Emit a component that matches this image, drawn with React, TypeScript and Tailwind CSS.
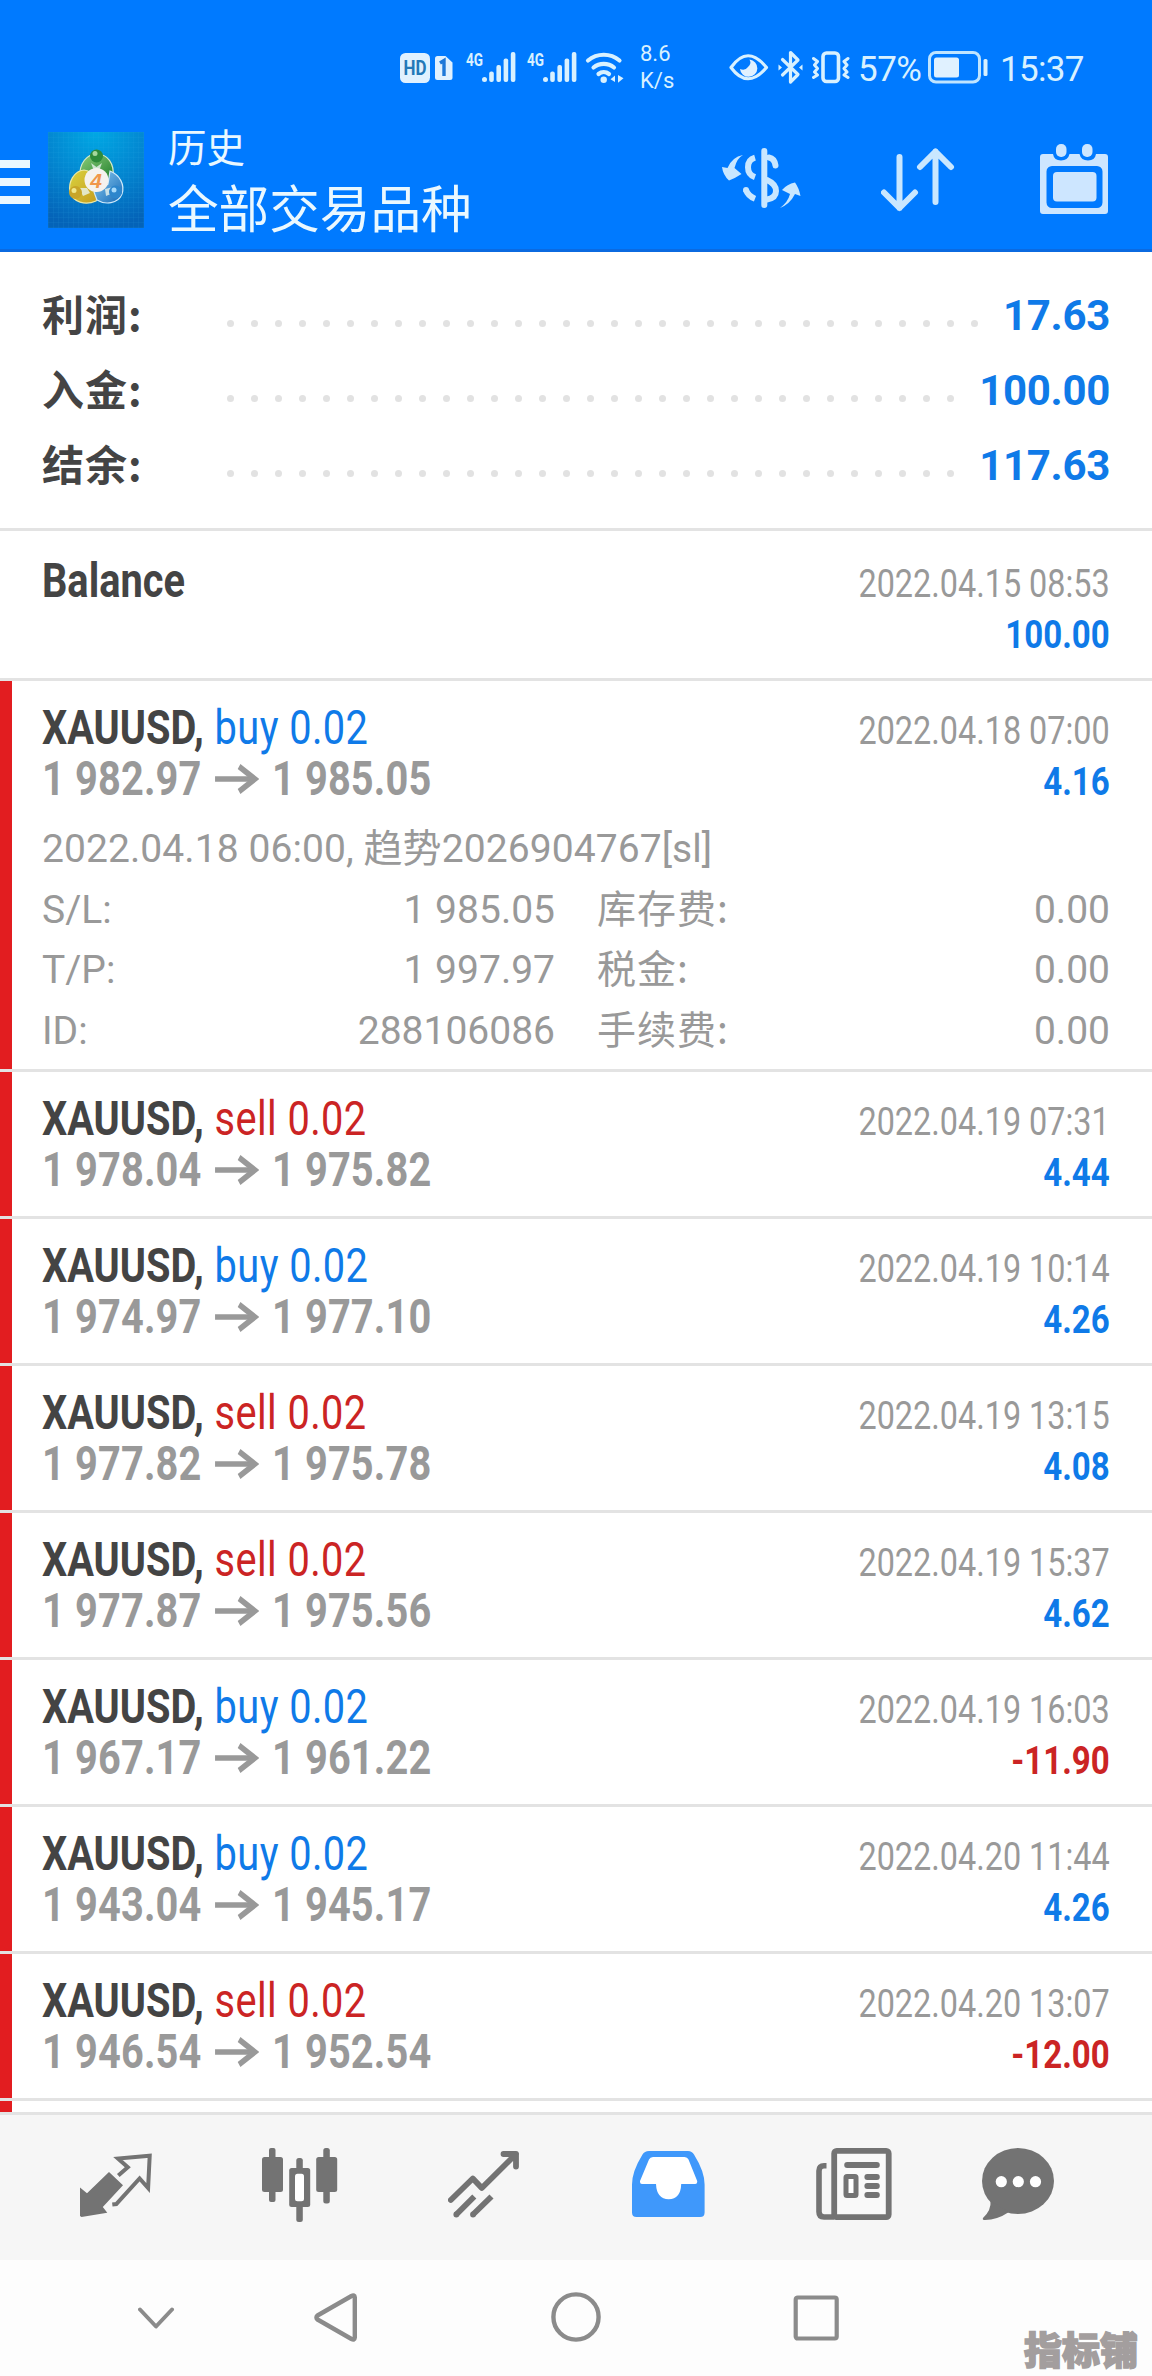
import type { ReactNode } from 'react'

type Trade = {
  side: 'buy' | 'sell'
  open: string
  close: string
  time: string
  profit: string
  expanded?: boolean
}

const summary = [
  { label: '利润:', value: '17.63', dots: 32 },
  { label: '入金:', value: '100.00', dots: 31 },
  { label: '结余:', value: '117.63', dots: 31 },
]

const trades: Trade[] = [
  { side: 'buy', open: '1 982.97', close: '1 985.05', time: '2022.04.18 07:00', profit: '4.16', expanded: true },
  { side: 'sell', open: '1 978.04', close: '1 975.82', time: '2022.04.19 07:31', profit: '4.44' },
  { side: 'buy', open: '1 974.97', close: '1 977.10', time: '2022.04.19 10:14', profit: '4.26' },
  { side: 'sell', open: '1 977.82', close: '1 975.78', time: '2022.04.19 13:15', profit: '4.08' },
  { side: 'sell', open: '1 977.87', close: '1 975.56', time: '2022.04.19 15:37', profit: '4.62' },
  { side: 'buy', open: '1 967.17', close: '1 961.22', time: '2022.04.19 16:03', profit: '-11.90' },
  { side: 'buy', open: '1 943.04', close: '1 945.17', time: '2022.04.20 11:44', profit: '4.26' },
  { side: 'sell', open: '1 946.54', close: '1 952.54', time: '2022.04.20 13:07', profit: '-12.00' },
]

const details = [
  ['S/L:', '1 985.05', '库存费:', '0.00'],
  ['T/P:', '1 997.97', '税金:', '0.00'],
  ['ID:', '288106086', '手续费:', '0.00'],
]

function Signal() {
  return (
    <svg width="50" height="32" viewBox="0 0 50 32" fill="#d8f1ff" className="overflow-visible">
      <text x="0" y="15" fontSize="18" fontWeight="700" fontFamily="Roboto" textLength="17" lengthAdjust="spacingAndGlyphs">4G</text>
      <rect x="16" y="26" width="5" height="5" rx="2.5" />
      <rect x="23.2" y="20.5" width="4.6" height="10.5" rx="2" />
      <rect x="30.4" y="14" width="4.6" height="17" rx="2" />
      <rect x="37.6" y="7.5" width="4.6" height="23.5" rx="2" />
      <rect x="44.8" y="1" width="4.6" height="30" rx="2" />
    </svg>
  )
}

function StatusBar() {
  return (
    <div className="flex h-[110px] items-start pl-[400px] pt-[51px] text-[#d8f1ff]">
      <svg width="53" height="33" viewBox="0 0 53 33" className="mr-[13px]">
        <rect x="0" y="2" width="30" height="30" rx="5.5" fill="#e0f1ff" />
        <text x="3.5" y="24" fontSize="20" fontWeight="700" fontFamily="Roboto" fill="#2378b8" textLength="23" lengthAdjust="spacingAndGlyphs">HD</text>
        <path d="M37.5 5h8l7 6.5v15a2.5 2.5 0 0 1-2.500 2.500h-12.500a2.500 2.500 0 0 1-2.500-2.500v-19a2.500 2.500 0 0 1 2.500-2.500z" fill="#e0f1ff" />
        <path d="M40 12l4-2.500v15.500" fill="none" stroke="#1e78d8" strokeWidth="3.400" />
      </svg>
      <Signal />
      <div className="w-[11px]" />
      <Signal />
      <svg width="40" height="34" viewBox="0 0 40 34" className="ml-[8px]" fill="none" stroke="#d8f1ff" strokeWidth="4.200" strokeLinecap="round">
        <path d="M3 9.500a24.500 24.500 0 0 1 31.500 0" />
        <path d="M8.500 16.500a16 16 0 0 1 20.500 0" />
        <path d="M13.500 23a8.500 8.500 0 0 1 10.500 0" />
        <circle cx="18.700" cy="28.800" r="3.200" fill="#d8f1ff" stroke="none" />
        <path d="M30 24.500v6.500l-4.500-2.800zM33 24l5.500 3.200-5.500 4.500z" fill="#d8f1ff" stroke="none" />
      </svg>
      <div className="-mt-[10px] ml-[15px] w-[90px] text-[22px] leading-[26.700px]">
        <div>8.6</div>
        <div>K/s</div>
      </div>
      <svg width="40" height="32" viewBox="0 0 40 32" className="-ml-px mt-px">
        <path d="M2 15.500Q18.500-8 37.500 15.500Q18.500 38 2 15.500z" fill="none" stroke="#d8f1ff" strokeWidth="3.200" strokeLinejoin="round" />
        <path d="M20.500 7.500a8.700 8.700 0 1 1-9.500 9.500a6.500 6.500 0 0 0 8-2a6 6 0 0 0 1.500-7.500z" fill="#e0f1ff" />
      </svg>
      <svg width="25" height="35" viewBox="0 0 25 35" className="-mt-px ml-[9px]" fill="none" stroke="#d8f1ff" strokeWidth="3.200" strokeLinejoin="round" strokeLinecap="round">
        <path d="M4.500 9.500l15.500 15-7.500 7.500v-29.500l7.500 7.500-15.500 15" />
        <path d="M.5 14.500v6l3.500-3zM24.500 14.500v6l-3.500-3z" fill="#d8f1ff" strokeWidth="0" />
      </svg>
      <svg width="38" height="33" viewBox="0 0 38 33" className="ml-[9px]" fill="none" stroke="#d8f1ff" strokeLinejoin="round" strokeLinecap="round">
        <rect x="11" y="2" width="15.500" height="28.500" rx="3.500" strokeWidth="3.600" />
        <path d="M1.500 7.500l4 3-3 3.500 3 3.500-3 3.500 3 3-4 2.500M36 7.500l-4 3 3 3.500-3 3.500 3 3.500-3 3 4 2.500" strokeWidth="3" />
      </svg>
      <div className="ml-[8px] w-[70px] text-[35px] leading-[37px] tracking-[-0.500px]">57%</div>
      <svg width="61" height="33" viewBox="0 0 61 33">
        <rect x="1.500" y="1.500" width="50" height="29.500" rx="6.500" fill="none" stroke="#bfe4ff" strokeWidth="3" />
        <rect x="6" y="6.500" width="25" height="20" rx="2.500" fill="#e0f1ff" />
        <rect x="55.500" y="8" width="4" height="17" rx="1.500" fill="#d8f1ff" />
      </svg>
      <div className="ml-[11px] text-[35px] leading-[37px] tracking-[-0.700px]">15:37</div>
    </div>
  )
}

function AppLogo() {
  return (
    <svg width="96" height="96" viewBox="0 0 96 96">
      <defs>
        <radialGradient id="sky" cx="0.500" cy="0" r="1">
          <stop offset="0" stopColor="#00a8e4" />
          <stop offset="0.550" stopColor="#0384cf" />
          <stop offset="1" stopColor="#0463b8" />
        </radialGradient>
        <linearGradient id="green" x1="0" y1="0" x2="1" y2="1">
          <stop offset="0" stopColor="#8fd07c" />
          <stop offset="1" stopColor="#1f7d2c" />
        </linearGradient>
        <linearGradient id="gold" x1="0" y1="0" x2="1" y2="1">
          <stop offset="0" stopColor="#d9d340" />
          <stop offset="1" stopColor="#c69a1c" />
        </linearGradient>
        <linearGradient id="azure" x1="0" y1="0" x2="1" y2="1">
          <stop offset="0" stopColor="#8ccdf2" />
          <stop offset="1" stopColor="#1367b5" />
        </linearGradient>
        <pattern id="grid" width="5" height="5" patternUnits="userSpaceOnUse">
          <path d="M0 0h5M0 0v5" stroke="#39b4ec" strokeWidth="0.500" opacity="0.350" />
        </pattern>
      </defs>
      <rect width="96" height="96" fill="url(#sky)" />
      <rect width="96" height="96" fill="url(#grid)" />
      <path d="M32 45c-1-14 7-23 17-23s18 9 16 24l-8 2-16-2z" fill="url(#green)" stroke="#d5e9c8" strokeWidth="1.200" />
      <path d="M36 38c-10 1-16 12-14 22 3 10 15 14 26 9l4-10-12-20z" fill="url(#gold)" stroke="#ece9a5" strokeWidth="1.200" />
      <path d="M62 39c10 4 15 14 12 23-4 10-17 11-25 6l-3-8 14-8z" fill="url(#azure)" stroke="#cfe9fa" strokeWidth="1.200" />
      <path d="M43 31l5.500 4 5.500-4-3 8h-5zM31 56l8 0 3 5-7 3zM57 57l8-2-2 7-5 2z" fill="#e9f4ee" opacity="0.800" />
      <circle cx="48.500" cy="24" r="6.500" fill="#2f8b3a" />
      <circle cx="47" cy="21.500" r="2.500" fill="#a6d79c" />
      <circle cx="27.500" cy="60.500" r="6.500" fill="#c8a528" />
      <circle cx="26" cy="58.500" r="2.500" fill="#f0e88c" />
      <circle cx="67.500" cy="60" r="6.500" fill="#2d86cc" />
      <circle cx="66" cy="58" r="2.500" fill="#a7dafa" />
      <circle cx="48.500" cy="48" r="12" fill="#f5f2ee" />
      <text x="48" y="55.500" textAnchor="middle" fontSize="21" fontWeight="700" fontStyle="italic" fontFamily="Liberation Sans" fill="#f0974a">4</text>
    </svg>
  )
}

function Header() {
  return (
    <header className="h-[252px] border-b-[3px] border-[#0b6ae0] bg-[#007aff]">
      <StatusBar />
      <div className="flex items-start pr-[43px] pt-[22px]">
        <div className="flex w-[48px] flex-col gap-[10px] pt-[28px]">
          <div className="h-[8px] w-[30px] bg-[#eaf8ff]" />
          <div className="h-[8px] w-[30px] bg-[#eaf8ff]" />
          <div className="h-[8px] w-[30px] bg-[#eaf8ff]" />
        </div>
        <AppLogo />
        <div className="-mt-[8px] ml-[24px] text-[#eaf8ff]">
          <div className="text-[38.500px] leading-[50px]">历史</div>
          <div className="mt-[5px] text-[50.600px] leading-[64px]">全部交易品种</div>
        </div>
        <svg width="79" height="61" viewBox="0 0 79 61" className="ml-auto mt-[16px]" fill="none" stroke="#c9e7ff" strokeWidth="6" strokeLinecap="round">
          <path d="M42.300 3v54" />
          <path d="M47 9.500q5.500 1 6.500 8M45 32q9 4 9 11t-9 8.500" />
          <path d="M33 9.700q-7 2-7 9.500t7 10M24 42q2 6 9 8.700" strokeLinecap="butt" />
          <circle cx="24" cy="42" r="3" fill="#c9e7ff" stroke="none" />
          <path d="M21 7q-6 3-8.500 13l7 6q-6 4-12.500 6.500Q1 27 0 19l5.500 1Q10 9 21 7z" fill="#c9e7ff" stroke="none" />
          <path d="M58 60q8-6 10-14l-8-4q5-6 13-7.500Q77 40 78.500 48l-5.500-2Q68 56 58 60z" fill="#c9e7ff" stroke="none" />
        </svg>
        <svg width="74" height="64" viewBox="0 0 74 64" className="ml-[80px] mt-[16px]" fill="none" stroke="#c9e7ff" strokeWidth="6" strokeLinecap="round" strokeLinejoin="round">
          <path d="M18.500 9v51M3 44.500l15.500 15.500 15.500-15.500" />
          <path d="M54.500 54v-50.500M39 19l15.500-15.500 15.500 15.500" />
        </svg>
        <svg width="70" height="72" viewBox="0 0 70 72" className="-mr-px ml-[85px] mt-[12px]" fill="#cde6ff">
          <path d="M4 10h9q1 6.500 8 6.500t8.500-6.500h10q1.500 6.500 8.500 6.500t8-6.500h9a3 3 0 0 1 3 3v54a3 3 0 0 1-3 3h-62a3 3 0 0 1-3-3v-54a3 3 0 0 1 3-3zM12 22a5.500 5.500 0 0 0-5.500 5.500v31a5.500 5.500 0 0 0 5.500 5.500h45a5.500 5.500 0 0 0 5.500-5.500v-31a5.500 5.500 0 0 0-5.500-5.500z" fillRule="evenodd" />
          <rect x="13" y="28" width="43.500" height="29.500" rx="4" />
          <rect x="16" y="0" width="10.500" height="13" rx="5" />
          <rect x="42" y="0" width="10.500" height="13" rx="5" />
        </svg>
      </div>
    </header>
  )
}

const Divider = () => <div className="h-[3px] bg-[#e3e3e3]" />

function Summary() {
  return (
    <section className="h-[276px] px-[42px] pt-[26px] font-bold">
      {summary.map(s => (
        <div key={s.label} className="flex h-[75px] text-[42px] leading-[75px]">
          <span className="-mt-[3px] w-[185px] font-['Noto_Sans_CJK_SC'] tracking-[1px] text-[#444444]">{s.label}</span>
          <div className="flex items-center gap-[17px] pt-[15px]">
            {Array.from({ length: s.dots }, (_, i) => (
              <i key={i} className="h-[7px] w-[7px] rounded-full bg-[#e2e2e2]" />
            ))}
          </div>
          <span className="ml-auto tracking-[-0.300px] text-[#0f7ae8]">{s.value}</span>
        </div>
      ))}
    </section>
  )
}

function Stamp({ time, profit }: { time: string; profit: string }) {
  return (
    <div className="mt-[4px] text-right text-[39px] leading-[51px]">
      <div className="origin-right scale-x-[0.830] text-[#999999]">{time}</div>
      <div className={`origin-right scale-x-[0.848] font-bold ${profit.startsWith('-') ? 'text-[#cb2424]' : 'text-[#0f7ae8]'}`}>
        {profit}
      </div>
    </div>
  )
}

function TradeRow({ trade }: { trade: Trade }) {
  return (
    <>
      <div className={`border-l-[12px] border-[#e21d20] pl-[30px] pr-[42px] pt-[21px] ${trade.expanded ? 'h-[388px]' : 'h-[144px]'}`}>
        <div className="flex justify-between">
          <div className="text-[48px] leading-[51px]">
            <div className="flex origin-left scale-x-[0.828] gap-[13px]">
              <span className="font-bold text-[#444444]">XAUUSD,</span>
              <span className={`tracking-[0.500px] ${trade.side === 'buy' ? 'text-[#0f7ae8]' : 'text-[#cb2424]'}`}>{trade.side} 0.02</span>
            </div>
            <div className="flex origin-left scale-x-[0.828] items-center font-bold tracking-[0.200px] text-[#999999]">
              {trade.open}
              <svg width="53" height="30" viewBox="0 0 53 30" className="ml-[16px] mr-[16px]" fill="none" stroke="#999999">
                <path d="M0 15h48" strokeWidth="5.500" />
                <path d="M29 2.500l19 12.500-19 12.500" strokeWidth="6" />
              </svg>
              {trade.close}
            </div>
          </div>
          <Stamp time={trade.time} profit={trade.profit} />
        </div>
        {/* Order details */}
        {trade.expanded && (
          <div className="mt-[11px] text-[39px] leading-[60.600px] text-[#999999]">
            <div className="tracking-[0.080px]">2022.04.18 06:00, 趋势2026904767[sl]</div>
            {details.map(([k1, v1, k2, v2]) => (
              <div key={k1} className="flex h-[60.600px]">
                <span>{k1}</span>
                <span className="ml-auto">{v1}</span>
                <span className="-mt-[4px] ml-[42px] w-[300px] font-['Noto_Sans_CJK_SC'] tracking-[1px]">{k2}</span>
                <span className="w-[213px] text-right">{v2}</span>
              </div>
            ))}
          </div>
        )}
      </div>
      <Divider />
    </>
  )
}

function TabIcon({ children }: { children: ReactNode }) {
  return <svg width="76" height="76" viewBox="0 0 76 76" fill="#737373">{children}</svg>
}

function TabBar() {
  return (
    <nav className="grid h-[148px] grid-cols-[182px_186px_184px_184px_166px_1fr] border-t-[3px] border-[#e3e3e3] bg-[#f6f6f6] pl-[80px] pt-[33px]">
      <TabIcon>
        <path d="M0 39.500l7 5.800 22-21.300 14 13.300-20.200 21.700 4.500 5.700-25.800 4.300-1.500-1z" />
        <path d="M38.300 27.500l9.500-8.300-9.800-8.700 31.700-2.700-1.600 32.200-8.500-9.500-23.300 25.500-4 .5" fill="none" stroke="#737373" strokeWidth="4" />
      </TabIcon>
      <TabIcon>
        <path d="M7 2a2 2 0 0 1 2-2h2.500a2 2 0 0 1 2 2v50a2 2 0 0 1-2 2h-2.500a2 2 0 0 1-2-2z" />
        <rect x="0" y="9" width="21" height="35" rx="2.500" />
        <rect x="34.300" y="10" width="6.500" height="64" rx="2.500" />
        <rect x="27.200" y="20" width="21" height="39" rx="2.500" />
        <rect x="33" y="25.700" width="9" height="27.500" rx="2.500" fill="#fff" />
        <rect x="61.300" y="0" width="6.500" height="55.500" rx="2.500" />
        <rect x="54.200" y="9" width="21" height="35" rx="2.500" />
      </TabIcon>
      <TabIcon>
        <g fill="none" stroke="#737373" strokeWidth="5.800">
          <path d="M2.800 52l22-21.500 9 9.500 34.200-34M55.500 6h12.500v12.500" strokeLinecap="round" strokeLinejoin="round" />
          <path d="M8.300 66.500l18-18M25 66.500l18.500-18" />
          <path d="M8.300 66.500h.01M25 66.500h.01" strokeLinecap="round" />
        </g>
      </TabIcon>
      <TabIcon>
        <path
          d="M17 3h39q4 0 6 3.500 10.600 17 10.600 30v28q0 4.500-4.500 4.500h-63.600q-4.500 0-4.500-4.500v-28q0-13 10.500-30 2-3.500 6.500-3.500z"
          fill="#3f98fb"
        />
        <path d="M21 9h31.500q3 0 4 2.500l8.700 21.500v1q0 2-2 2h-14q-.5 15.200-12.500 15.200t-12.700-15.200h-14q-2 0-2-2v-1l9-21.500q1-2.500 4-2.500z" fill="#fff" />
      </TabIcon>
      <TabIcon>
        <rect x="18.200" y="2.900" width="54.500" height="66.200" rx="2.500" fill="#f9f9f9" stroke="#737373" strokeWidth="5.800" />
        <path d="M10.500 17.800h-2.500q-5 0-5 5v41q0 5.200 5 5.200h10" fill="none" stroke="#737373" strokeWidth="5.600" />
        <rect x="28.200" y="14" width="35.600" height="6" rx="3" />
        <rect x="30" y="28.500" width="10" height="19" rx="1" fill="#fff" stroke="#737373" strokeWidth="5" />
        <rect x="48.400" y="26" width="15.400" height="5.900" rx="2.900" />
        <rect x="48.400" y="35" width="15.400" height="5.900" rx="2.900" />
        <rect x="48.400" y="44" width="15.400" height="5.900" rx="2.900" />
      </TabIcon>
      <TabIcon>
        <ellipse cx="36" cy="33" rx="36" ry="33" />
        <path d="M8.500 53q1 9-7.500 17-1 2 2 2 12 0 24-8z" />
        <g fill="#fff">
          <circle cx="19.300" cy="33.700" r="5.600" />
          <circle cx="36.300" cy="33.700" r="5.600" />
          <circle cx="53.500" cy="33.700" r="5.600" />
        </g>
      </TabIcon>
    </nav>
  )
}

function SystemNav() {
  return (
    <div className="relative grid h-[116px] grid-cols-[176px_237px_242px_1fr] bg-[#fdfdfd] pl-[138px] pt-[31px]">
      <svg width="38" height="52" viewBox="0 0 38 52" fill="none" stroke="#8b8b8b" strokeWidth="4" strokeLinecap="round" strokeLinejoin="round">
        <path d="M2 18.500l16 17 16-17" />
      </svg>
      <svg width="46" height="54" viewBox="0 0 46 54" fill="none" stroke="#8b8b8b" strokeWidth="4.400" strokeLinejoin="round">
        <path d="M37.500 5q3-1.500 3.300 1.500v40q-.3 3-3.300 1.500l-34-19.500q-2.200-2 0-4z" />
      </svg>
      <svg width="50" height="54" viewBox="0 0 50 54" fill="none" stroke="#8b8b8b" strokeWidth="4.400">
        <circle cx="25" cy="26" r="22.600" />
      </svg>
      <svg width="50" height="54" viewBox="0 0 50 54" fill="none" stroke="#8b8b8b" strokeWidth="4.200">
        <rect x="2.700" y="6.500" width="41" height="41" rx="2" />
      </svg>
      <div className="absolute bottom-[7px] right-[14px] font-['Noto_Sans_CJK_SC'] text-[38px] font-black leading-[42px] text-[#a39e9e] [-webkit-text-stroke:1.500px_#a39e9e]">
        指标铺
      </div>
    </div>
  )
}

export default function App() {
  return (
    <div className="h-[2376px] w-[1152px] overflow-hidden bg-white font-['Roboto','Noto_Sans_CJK_SC',sans-serif]">
      <Header />
      <Summary />
      <Divider />
      <div className="flex h-[147px] justify-between px-[42px] pt-[24px]">
        <div className="origin-left scale-x-[0.828] text-[48px] font-bold leading-[51px] text-[#444444]">Balance</div>
        <Stamp time="2022.04.15 08:53" profit="100.00" />
      </div>
      <Divider />
      {trades.map(t => (
        <TradeRow key={t.time} trade={t} />
      ))}
      {/* Top edge of the next row */}
      <div className="h-[11px] border-l-[12px] border-[#e21d20]" />
      <TabBar />
      <SystemNav />
    </div>
  )
}
